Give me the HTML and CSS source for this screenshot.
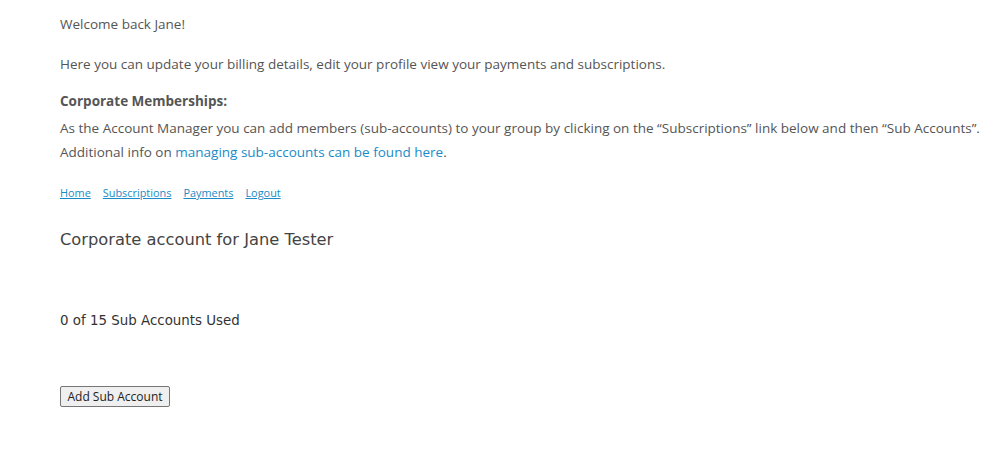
FILE: index.html
```html
<!DOCTYPE html>
<html>
<head>
<meta charset="utf-8">
<link rel="stylesheet" href="styles.css">
</head>
<body>
<div class="page">
  <p class="welcome">Welcome back Jane!</p>
  <p class="intro">Here you can update your billing details, edit your profile view your payments and subscriptions.</p>
  <div class="corp">
    <div class="corp-title">Corporate Memberships:</div>
    <div class="corp-line">As the Account Manager you can add members (sub-accounts) to your group by clicking on the “Subscriptions” link below and then “Sub Accounts”.</div>
    <div class="corp-line">Additional info on <a href="#" class="info-link">managing sub-accounts can be found here</a>.</div>
  </div>
  <nav class="nav">
    <a href="#">Home</a>
    <a href="#">Subscriptions</a>
    <a href="#">Payments</a>
    <a href="#">Logout</a>
  </nav>
  <h2 class="heading">Corporate account for Jane Tester</h2>
  <p class="used">0 of 15 Sub Accounts Used</p>
  <button class="add-btn">Add Sub Account</button>
</div>
</body>
</html>
```

FILE: styles.css
```css
html, body {
  margin: 0;
  padding: 0;
  background: #fff;
}
body {
  font-family: "Open Sans", "Noto Sans", sans-serif;
  font-size: 13.5px;
  color: #555;
}
.page {
  padding: 12px 0 0 60px;
}
p { margin: 0; }
.welcome, .intro {
  line-height: 24px;
}
.intro {
  margin-top: 16px;
}
.corp {
  margin-top: 13px;
  line-height: 24px;
}
.corp-title {
  font-weight: 700;
  margin-bottom: 3px;
}
.info-link {
  color: #1a8bc6;
  text-decoration: none;
}
.nav {
  margin-top: 21px;
  font-size: 10.9px;
  line-height: 16px;
  display: flex;
  gap: 12px;
}
.nav a {
  color: #1a8bc6;
  text-decoration: underline;
}
.heading {
  margin: 28px 0 0;
  font-family: "DejaVu Sans", "Noto Sans", sans-serif;
  font-weight: 400;
  font-size: 16.3px;
  line-height: 22px;
  color: #444;
}
.used {
  margin-top: 60px;
  font-family: "DejaVu Sans", "Noto Sans", sans-serif;
  font-size: 13.4px;
  line-height: 20px;
  color: #333;
}
.add-btn {
  margin-top: 55px;
  font-family: "Open Sans", "Noto Sans", sans-serif;
  font-size: 12px;
  color: #222;
  background: #efefef;
  border: 1px solid #767676;
  border-radius: 2px;
  padding: 1px 6px;
  height: 21px;
  width: 110px;
}
```
